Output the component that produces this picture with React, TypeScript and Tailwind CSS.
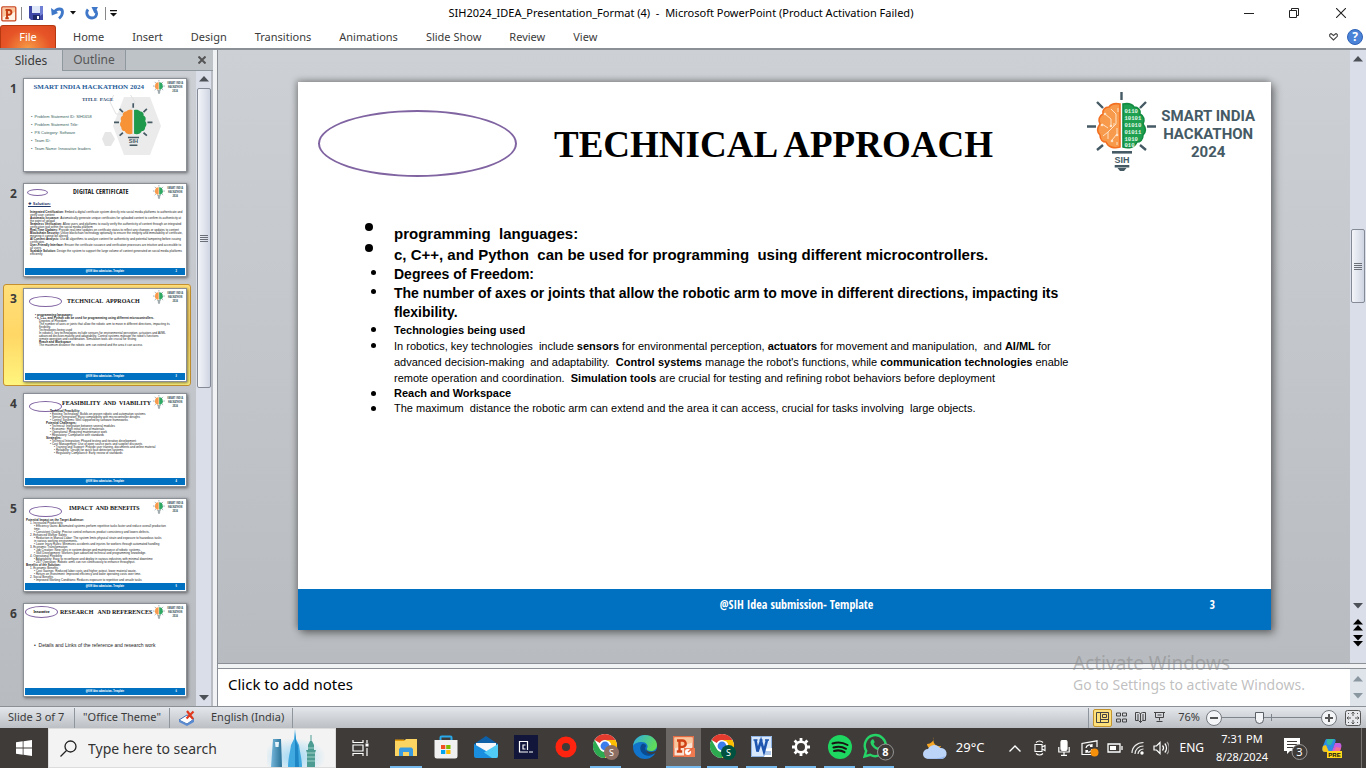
import type { ReactNode } from "react";

const UI = "font-['Noto_Sans','Open_Sans',sans-serif]";

/* ---------- logo ---------- */

function Bulb({ className }: { className: string }) {
  return (
    <svg viewBox="0 0 70 80" className={className} aria-hidden="true">
      <g stroke="#455a64" strokeWidth="2.4" fill="none">
        <path d="M34.5 0v8M0 34.5h9M60 34.5h9M10 10l6 6M59 10l-6 6M10 58l6-5M59 58l-6-5" />
      </g>
      <path
        d="M33 12c-5-1-9 0-11 3-4 0-7 3-6 7-4 2-5 6-3 10-3 4-3 8 0 11 0 5 3 7 6 7 2 5 8 7 14 5z"
        fill="#f79a4b"
        stroke="#f36f21"
        strokeWidth="1.6"
      />
      <path
        d="M36 12c5-1 9 0 11 3 4 0 7 3 6 7 4 2 5 6 3 10 3 4 3 8 0 11 0 5-3 7-6 7-2 5-8 7-14 5z"
        fill="#1fa050"
        stroke="#128a41"
        strokeWidth="1.6"
      />
      <path
        d="M18 22l6 5v7M24 17l5 5v10l-8 8v7M15 32l6 4M31 16v4M16 44l5-4M30 36v6l-5 6M30 50v3M27 31v3"
        stroke="#fde2c8"
        strokeWidth="1"
        fill="none"
      />
      <g fill="#fde2c8">
        <circle cx="18" cy="22" r="1.3" />
        <circle cx="24" cy="34" r="1.3" />
        <circle cx="15" cy="33" r="1.3" />
        <circle cx="30" cy="43" r="1.3" />
        <circle cx="25" cy="49" r="1.3" />
      </g>
      <g fill="#e2f6e8" fontFamily="Liberation Mono, monospace" fontSize="5.6" fontWeight="700">
        <text x="37.500" y="21">0110</text>
        <text x="37.500" y="28">10101</text>
        <text x="37.500" y="35">01010</text>
        <text x="37.500" y="42">01011</text>
        <text x="37.500" y="48.500">1010</text>
        <text x="37.500" y="54.500">010</text>
      </g>
      <rect x="25" y="59" width="20" height="2.6" fill="#455a64" />
      <text x="35" y="70.500" textAnchor="middle" fontFamily="Liberation Sans, sans-serif" fontSize="9" fontWeight="700" fill="#455a64">
        SIH
      </text>
      <path d="M27.700 73h14.600v2.400H27.700zM30.500 76h9l-2.500 3h-4z" fill="#455a64" />
    </svg>
  );
}

/* Simplified bulb for sizes at which the circuit and digits cannot be read. */
function BulbMini({ className }: { className: string }) {
  return (
    <svg viewBox="0 0 70 80" className={className} aria-hidden="true">
      <path d="M34.500 0v8M0 34.500h9M60 34.500h9M10 10l6 6M59 10l-6 6M10 58l6-5M59 58l-6-5" stroke="#455a64" strokeWidth="3" />
      <path d="M33 12c-5-1-9 0-11 3-4 0-7 3-6 7-4 2-5 6-3 10-3 4-3 8 0 11 0 5 3 7 6 7 2 5 8 7 14 5z" fill="#f79a4b" />
      <path d="M36 12c5-1 9 0 11 3 4 0 7 3 6 7 4 2 5 6 3 10 3 4 3 8 0 11 0 5-3 7-6 7-2 5-8 7-14 5z" fill="#2fa863" />
      <path d="M25 60h20v4H25zM28 66h14v4H28zM28 73h14l-4 5h-6z" fill="#455a64" />
    </svg>
  );
}

function ThumbLogo() {
  return (
    <div className="ml-auto flex shrink-0 items-center gap-[2px] pr-[3px]">
      <BulbMini className="h-[14px] w-3" />
      <div className="text-center font-['Open_Sans_Condensed','Roboto',sans-serif] text-[3px] leading-[4px] font-bold whitespace-nowrap text-[#455a64]">
        SMART INDIA
        <br />
        HACKATHON
        <br />
        2024
      </div>
    </div>
  );
}

/* ---------- slide thumbnails ---------- */

type Line = { h?: string; t: string; b?: boolean; i?: 0 | 1 | 2 };
const INDENT = ["pl-0", "pl-1", "pl-2"];

function Lines({ lines }: { lines: Line[] }) {
  return (
    <div>
      {lines.map((l, k) => (
        <p key={k} className={`${INDENT[l.i ?? 0]} ${l.b ? "font-bold" : ""}`}>
          {l.h ? <b>{l.h} </b> : null}
          {l.t}
        </p>
      ))}
    </div>
  );
}

function ThumbFooter({ n }: { n: number }) {
  return (
    <div className="mx-px mb-px grid h-[7px] shrink-0 grid-cols-[1fr_auto_1fr] items-center bg-[#0070c0] font-['Open_Sans_Condensed','Roboto',sans-serif] text-[3px] leading-[3px] font-bold text-white">
      <span />
      <span>@SIH Idea submission- Template</span>
      <span className="pr-2 text-right">{n}</span>
    </div>
  );
}

function ThumbHead({ ellipse, title }: { ellipse: ReactNode; title: ReactNode }) {
  return (
    <div className="flex h-4 shrink-0 items-center">
      {ellipse}
      {title}
      <ThumbLogo />
    </div>
  );
}

const OVAL = "shrink-0 rounded-[50%] border border-[#8064a2]";
const SERIF_TITLE = "font-['Liberation_Serif',serif] text-[6px] leading-[8px] font-bold whitespace-pre text-[#111]";

const SLIDE2: Line[] = [
  { h: "Integrated Certification:", t: "Embed a digital certificate system directly into social media platforms to authenticate and" },
  { t: "verify user content" },
  { h: "Automatic Issuance:", t: "Automatically generate unique certificates for uploaded content to confirm its authenticity at" },
  { t: "the point of upload" },
  { h: "Seamless Verification:", t: "Allow users and platforms to easily verify the authenticity of content through an integrated" },
  { t: "verification tool within the social media platform" },
  { h: "Real-Time Updates:", t: "Provide real-time updates on certificate status to reflect any changes or updates to content" },
  { h: "Blockchain Security:", t: "Utilize blockchain technology optionally to ensure the integrity and immutability of certificate," },
  { t: "meaning it cannot be altered" },
  { h: "AI Content Analysis:", t: "Use AI algorithms to analyze content for authenticity and potential tampering before issuing" },
  { t: "certificates" },
  { h: "User-Friendly Interface:", t: "Ensure the certificate issuance and verification processes are intuitive and accessible to" },
  { t: "all users" },
  { h: "Scalable Solution:", t: "Design the system to support the large volume of content generated on social media platforms" },
  { t: "efficiently" },
];

const SLIDE3: Line[] = [
  { t: "• programming languages:", b: true },
  { t: "• c, C++, and Python can be used for programming using different microcontrollers.", b: true },
  { t: "Degrees of Freedom:", i: 1 },
  { t: "The number of axes or joints that allow the robotic arm to move in different directions, impacting its", i: 1 },
  { t: "flexibility.", i: 1 },
  { t: "Technologies being used", i: 1 },
  { t: "In robotics, key technologies include sensors for environmental perception, actuators and AI/ML", i: 1 },
  { t: "advanced decision-making and adaptability. Control systems manage the robot's functions", i: 1 },
  { t: "remote operation and coordination. Simulation tools are crucial for testing", i: 1 },
  { t: "Reach and Workspace", i: 1, b: true },
  { t: "The maximum distance the robotic arm can extend and the area it can access", i: 1 },
];

const SLIDE4: Line[] = [
  { t: "Technical Feasibility:", b: true, i: 1 },
  { t: "• Existing Technology: Builds on proven robotic and automation systems", i: 1 },
  { t: "• Sensor Integration: Easy compatibility with microcontroller designs", i: 1 },
  { t: "• Control Systems: Well supported by software frameworks", i: 1 },
  { t: "Potential Challenges:", b: true },
  { t: "• Technical: Integration between several modules", i: 1 },
  { t: "• Economic: High initial price of materials", i: 1 },
  { t: "• Operational: Requiring maintenance work", i: 1 },
  { t: "• Regulatory: Compliance with standards", i: 1 },
  { t: "Strategies:", b: true },
  { t: "• Technical Integration: Phased testing and iterative development", i: 1 },
  { t: "• Cost Management: Use of open source parts and supplier discounts", i: 1 },
  { t: "• Training and Support: Provide user training, documents and online material", i: 2 },
  { t: "• Reliability: Design for quick fault detection systems", i: 2 },
  { t: "• Regulatory Compliance: Early review of standards", i: 2 },
];

const SLIDE5: Line[] = [
  { t: "Potential Impact on the Target Audience:", b: true },
  { t: "1. Increased Productivity", i: 1 },
  { t: "• Efficiency Gains: Automated systems perform repetitive tasks faster and reduce overall production", i: 2 },
  { t: "time.", i: 2 },
  { t: "• Consistent Quality: Precise control enhances product consistency and lowers defects.", i: 2 },
  { t: "2. Enhanced Worker Safety", i: 1 },
  { t: "• Reduction in Manual Labor: The system limits physical strain and exposure to hazardous tasks", i: 2 },
  { t: "in various working environments.", i: 2 },
  { t: "• Lower Injury Rates: Minimizes accidents and injuries for workers through automated handling", i: 2 },
  { t: "3. Economic Transformation", i: 1 },
  { t: "• Job Creation: New roles in system design and maintenance of robotic systems.", i: 2 },
  { t: "• Skill Development: Workers gain advanced technical and programming knowledge.", i: 2 },
  { t: "4. Operational Flexibility", i: 1 },
  { t: "• Adaptability: Easy to reconfigure and deploy in various industries with minimal downtime", i: 2 },
  { t: "• 24/7 Operation: Robotic arms can run continuously to enhance throughput.", i: 2 },
  { t: "Benefits of the Solution:", b: true },
  { t: "1. Economic Benefits", i: 1 },
  { t: "• Cost Savings: Reduced labor costs and higher output, lower material waste.", i: 2 },
  { t: "• Return on Investment: Improved efficiency and lower operating costs over time.", i: 2 },
  { t: "2. Social Benefits", i: 1 },
  { t: "• Improved Working Conditions: Reduces exposure to repetitive and unsafe tasks", i: 2 },
];

const SMALL = "font-['Liberation_Sans',sans-serif] text-[3px] leading-[3px] whitespace-nowrap text-[#222]";

function Thumb1() {
  return (
    <div className="flex h-full flex-col text-left">
      <div className="flex h-4 shrink-0 items-center">
        <span className="ml-auto font-['Liberation_Serif',serif] text-[7px] leading-[8px] font-bold whitespace-nowrap text-[#1f5c99]">
          SMART INDIA HACKATHON 2024
        </span>
        <ThumbLogo />
      </div>
      <div className="flex flex-1">
        <div className="relative z-10 w-[78px] shrink-0">
          <p className="pl-[58px] font-['Liberation_Serif',serif] text-[5px] leading-[10px] font-bold whitespace-pre text-[#2c4770]">
            TITLE  PAGE
          </p>
          <ul className="list-none pt-2 pl-[7px] font-['Liberation_Sans',sans-serif] text-[4px] leading-[8px] whitespace-nowrap text-[#35605a]">
            <li>•&nbsp; Problem Statement ID: SIH1658</li>
            <li>•&nbsp; Problem Statement Title:</li>
            <li>•&nbsp; PS Category: Software</li>
            <li>•&nbsp; Team ID:</li>
            <li>•&nbsp; Team Name: Innovative leaders</li>
          </ul>
        </div>
        <svg viewBox="0 0 62 62" className="h-[62px] w-[62px]" aria-hidden="true">
          <path d="M22 2h26l11 29-11 29H22L11 31z" fill="#ebebeb" />
          <path d="M3 37h6l4 7-4 7H3l-3-7z" fill="#e6e6e6" />
          <path d="M14-4h12l7 11-7 12H14L8 7z" fill="none" stroke="#e2e2e2" strokeWidth="1" />
          <svg x="12" y="7" width="39" height="47" viewBox="0 0 70 80">
            <g stroke="#455a64" strokeWidth="3">
              <path d="M34.500 0v8M0 34.500h9M60 34.500h9M10 10l6 6M59 10l-6 6M10 58l6-5M59 58l-6-5" />
            </g>
            <path d="M33 12c-5-1-9 0-11 3-4 0-7 3-6 7-4 2-5 6-3 10-3 4-3 8 0 11 0 5 3 7 6 7 2 5 8 7 14 5z" fill="#f79336" />
            <path d="M36 12c5-1 9 0 11 3 4 0 7 3 6 7 4 2 5 6 3 10 3 4 3 8 0 11 0 5-3 7-6 7-2 5-8 7-14 5z" fill="#1f9a4d" />
            <path d="M25 60h20v3H25zM28 74h14v3H28z" fill="#455a64" />
            <text x="35" y="72" textAnchor="middle" fontSize="10" fontWeight="700" fontFamily="Liberation Sans, sans-serif" fill="#455a64">SIH</text>
          </svg>
        </svg>
      </div>
    </div>
  );
}

function Thumb2() {
  return (
    <div className="flex h-full flex-col text-left">
      <ThumbHead
        ellipse={<div className={`${OVAL} ml-[3px] h-[7px] w-[21px]`} />}
        title={
          <span className="flex-1 text-center font-['Open_Sans_Condensed','Roboto',sans-serif] text-[7px] leading-[8px] font-bold whitespace-nowrap text-[#222]">
            DIGITAL CERTIFICATE
          </span>
        }
      />
      <p className="pt-px pl-1 text-[4px] leading-[6px] font-bold text-[#1f3a6b] underline">❖ Solution:</p>
      <div className={`${SMALL} flex-1 pt-1 pl-[6px]`}>
        <Lines lines={SLIDE2} />
      </div>
      <ThumbFooter n={2} />
    </div>
  );
}

function Thumb3() {
  return (
    <div className="flex h-full flex-col text-left">
      <ThumbHead
        ellipse={<div className={`${OVAL} mt-2 ml-[5px] h-[11px] w-[33px]`} />}
        title={<span className={`${SERIF_TITLE} mt-2 ml-[5px]`}>TECHNICAL  APPROACH</span>}
      />
      <div className={`${SMALL} flex-1 pt-[9px] pl-[11px]`}>
        <Lines lines={SLIDE3} />
      </div>
      <ThumbFooter n={3} />
    </div>
  );
}

function Thumb4() {
  return (
    <div className="flex h-full flex-col text-left">
      <ThumbHead
        ellipse={<div className={`${OVAL} mt-2 ml-[5px] h-[11px] w-[33px]`} />}
        title={<span className={`${SERIF_TITLE} mt-px`}>FEASIBILITY  AND  VIABILITY</span>}
      />
      <div className={`${SMALL} flex-1 pl-[22px]`}>
        <Lines lines={SLIDE4} />
      </div>
      <ThumbFooter n={4} />
    </div>
  );
}

function Thumb5() {
  return (
    <div className="flex h-full flex-col text-left">
      <ThumbHead
        ellipse={<div className={`${OVAL} mt-2 ml-[5px] h-[11px] w-[33px]`} />}
        title={<span className={`${SERIF_TITLE} mt-px ml-[7px]`}>IMPACT  AND BENEFITS</span>}
      />
      <div className={`${SMALL} h-0 flex-1 pt-1 pl-[2px]`}>
        <Lines lines={SLIDE5} />
      </div>
      <ThumbFooter n={5} />
    </div>
  );
}

function Thumb6() {
  return (
    <div className="flex h-full flex-col text-left">
      <ThumbHead
        ellipse={
          <div className={`${OVAL} ml-px flex h-3 w-[33px] items-center justify-center text-[3px] leading-[3px] font-bold`}>Innovative</div>
        }
        title={<span className={`${SERIF_TITLE} ml-[2px]`}>RESEARCH   AND REFERENCES</span>}
      />
      <p className="flex-1 pt-[22px] pl-[10px] font-['Liberation_Sans',sans-serif] text-[5px] leading-[6px] text-[#222]">
        •&nbsp; Details and Links of the reference and research work
      </p>
      <ThumbFooter n={6} />
    </div>
  );
}

const THUMBS = [Thumb1, Thumb2, Thumb3, Thumb4, Thumb5, Thumb6];

/* ---------- scroll bars ---------- */

function Arrow({ dir, color = "#4c5158" }: { dir: "up" | "down"; color?: string }) {
  return (
    <svg viewBox="0 0 10 6" className="h-[6px] w-[10px] shrink-0" aria-hidden="true">
      <path d={dir === "up" ? "M0 5.500L5 0l5 5.500z" : "M0 0l5 5.500L10 0z"} fill={color} />
    </svg>
  );
}

function Grip() {
  return (
    <div className="flex w-2 flex-col gap-px">
      <i className="h-px bg-[#6b7078]" />
      <i className="h-px bg-[#6b7078]" />
      <i className="h-px bg-[#6b7078]" />
      <i className="h-px bg-[#6b7078]" />
    </div>
  );
}

const SB_THUMB =
  "flex w-[14px] items-center justify-center rounded-[2px] border border-[#858b96] bg-linear-to-r from-[#f3f5f9] to-[#cfd5e2]";

/* ---------- ribbon ---------- */

const TABS = ["Home", "Insert", "Design", "Transitions", "Animations", "Slide Show", "Review", "View"];

function PptSmall() {
  return (
    <svg viewBox="0 0 17 17" className="h-[17px] w-[17px]" aria-hidden="true">
      <rect x="1.800" y="1.800" width="14" height="14" rx="1" fill="#fff3e6" stroke="#c9441c" strokeWidth="1.300" />
      <path d="M3 3h12v4L3 12z" fill="#f9b27a" opacity=".7" />
      <path d="M7 13.500V5M5.500 5H9a2.400 2.400 0 0 1 0 4.800H7M5.300 13.300h3.500" fill="none" stroke="#c53d13" strokeWidth="1.900" />
    </svg>
  );
}

function TitleBar() {
  return (
    <header className="flex h-[26px] shrink-0 items-center bg-white">
      <div className="flex w-[120px] shrink-0 items-center">
        <PptSmall />
        <span className="ml-1 h-[13px] w-px bg-[#888]" />
        <button aria-label="Save" className="ml-[7px]">
          <svg viewBox="0 0 14 14" className="h-[14px] w-[14px]">
            <path d="M0 0h14v14H2l-2-2z" fill="#4149a8" />
            <path d="M3 0h8v7H3z" fill="#dfe8f8" />
            <path d="M11 0h3v8l-3 2z" fill="#6f7fd4" />
            <path d="M4 9h7v5H4z" fill="#1f2a6b" />
            <path d="M8 10h2v3H8z" fill="#fff" />
          </svg>
        </button>
        <button aria-label="Undo" className="ml-2">
          <svg viewBox="0 0 14 14" className="h-[14px] w-[14px]">
            <path d="M3.500 6C6 2 11.500 2 11.500 6c0 2.800-1.500 4.800-3.500 6.500" fill="none" stroke="#3f78c9" strokeWidth="2.800" />
            <path d="M0 2l.8 7.500L7.200 7z" fill="#3f78c9" />
          </svg>
        </button>
        <svg viewBox="0 0 6 4" className="ml-[5px] h-1 w-[6px]" aria-hidden="true">
          <path d="M0 0h6L3 3.500z" fill="#111" />
        </svg>
        <button aria-label="Repeat" className="ml-[9px]">
          <svg viewBox="0 0 14 14" className="h-[14px] w-[14px]">
            <path d="M3 3.500c-2.500 3-1 8.500 4 8.500 4.500 0 6-5 3-8" fill="none" stroke="#3f78c9" strokeWidth="2.800" />
            <path d="M6.500 1H13L9.500 7.500z" fill="#3f78c9" />
          </svg>
        </button>
        <span className="ml-[6px] h-[13px] w-px bg-[#888]" />
        <svg viewBox="0 0 7 7" className="ml-1 h-[7px] w-[7px]" aria-hidden="true">
          <path d="M0 0h7v1.300H0zM0 3h7L3.500 6.500z" fill="#111" />
        </svg>
      </div>
      <h1 className="flex-1 pl-4 text-center text-[11px] leading-4 whitespace-pre text-black">
        SIH2024_IDEA_Presentation_Format (4)  -  Microsoft PowerPoint (Product Activation Failed)
      </h1>
      <div className="flex shrink-0 items-center">
        <button aria-label="Minimize" className="flex w-[46px] justify-center">
          <svg viewBox="0 0 10 10" className="h-[10px] w-[10px]">
            <path d="M0 5.500h10" stroke="#222" />
          </svg>
        </button>
        <button aria-label="Restore" className="flex w-[44px] justify-center">
          <svg viewBox="0 0 10 10" className="h-[10px] w-[10px]" fill="none" stroke="#222">
            <path d="M.5 2.500h7v7h-7zM2.500 2.500v-2h7v7h-2" />
          </svg>
        </button>
        <button aria-label="Close" className="flex w-[50px] justify-center">
          <svg viewBox="0 0 10 10" className="h-[10px] w-[10px]">
            <path d="M0 0l10 10M10 0L0 10" stroke="#222" strokeWidth="1.100" />
          </svg>
        </button>
      </div>
    </header>
  );
}

function RibbonTabs() {
  return (
    <nav className="flex h-6 shrink-0 items-stretch border-b-2 border-[#8b9097] bg-white text-[11px] text-[#3b3b3b]">
      <button className="mt-[-1px] w-14 rounded-t-[3px] border border-b-0 border-[#b5380f] bg-[radial-gradient(ellipse_at_bottom,#f79a45_0%,#e65427_60%,#dd4a22_100%)] text-white">
        File
      </button>
      <div className="flex pl-[3px]">
        {TABS.map((t) => (
          <button key={t} className="px-[14px]">
            {t}
          </button>
        ))}
      </div>
      <div className="ml-auto flex items-center gap-[9px] pr-[3px]">
        <button aria-label="Minimize the Ribbon">
          <svg viewBox="0 0 9 8" className="h-2 w-[9px]" fill="none" stroke="#444" strokeWidth="1.100">
            <path d="M4.500 7L.7 3.300V1.500l1.300-1 2.500 2 2.500-2 1.300 1v1.800z" />
          </svg>
        </button>
        <button aria-label="Help" className="flex size-4 items-center justify-center rounded-full border border-[#2f62b5] bg-[#4b83d8] text-[12px] leading-3 font-bold text-white">
          ?
        </button>
      </div>
    </nav>
  );
}

/* ---------- left pane ---------- */

function SlidesPane() {
  return (
    <aside className="flex w-[213px] shrink-0 flex-col bg-linear-to-b from-[#cdd1d6] to-[#b8bbc0]">
      <div className="flex h-[21px] shrink-0 text-[12px] leading-5 text-[#3b3b3b]">
        <button className="w-[62px]">Slides</button>
        <button className="w-16 border-x border-b border-[#8f979f] bg-[#b6babf] text-[#555]">Outline</button>
        <div className="flex flex-1 items-center justify-end border-b border-[#8f979f] bg-[#bec3c8] pr-[7px]">
          <button aria-label="Close pane">
            <svg viewBox="0 0 8 8" className="h-2 w-2">
              <path d="M.5.5l7 7M7.500.5l-7 7" stroke="#555" strokeWidth="2" />
            </svg>
          </button>
        </div>
      </div>
      <div className="flex min-h-0 flex-1">
        <ol className="flex min-w-0 flex-1 flex-col gap-[3px] overflow-hidden pt-[3px] pr-[5px] pl-[3px]">
          {THUMBS.map((T, k) => (
            <li key={k} className="shrink-0">
              <button
                className={`flex h-[102px] w-full items-start rounded-[3px] border pt-[3px] ${
                  k === 2
                    ? "border-[#c4902f] bg-linear-to-b from-[#ffdf7a] via-[#ffd766] to-[#fff57e]"
                    : "border-transparent"
                }`}
              >
                <span className="w-[19px] shrink-0 pt-[3px] text-center text-[12px] leading-4 font-bold text-[#3b3b3b]">{k + 1}</span>
                <span className="block h-[94px] w-[164px] shrink-0 overflow-hidden border border-[#8a8f96] bg-white shadow-[1px_1px_3px_rgba(0,0,0,0.5)]">
                  <T />
                </span>
              </button>
            </li>
          ))}
        </ol>
        <div className="flex w-[15px] shrink-0 flex-col items-center bg-[#d9dee8] py-[5px]">
          <Arrow dir="up" />
          <div className={`${SB_THUMB} mt-[6px] h-[300px]`}>
            <Grip />
          </div>
          <div className="mt-auto">
            <Arrow dir="down" />
          </div>
        </div>
        <div className="w-[2px] bg-[#b9bdc3]" />
      </div>
    </aside>
  );
}

/* ---------- slide ---------- */

function Bullet({ big, children, className }: { big?: boolean; children: ReactNode; className: string }) {
  return (
    <li className={`flex whitespace-pre-wrap ${className}`}>
      <span className={`w-[33px] shrink-0 ${big ? "pl-1" : "pt-[5px] pl-[10px]"}`}>
        <i className={`block rounded-full bg-black ${big ? "size-2" : "size-[5px]"}`} />
      </span>
      <div>{children}</div>
    </li>
  );
}

function Slide() {
  return (
    <article className="flex flex-1 flex-col bg-white shadow-[3px_3px_8px_rgba(0,0,0,0.45),-2px_-2px_6px_rgba(0,0,0,0.25)]">
      <div className="flex h-[141px] items-start pt-[10px] pr-4 pl-5">
        <div className="mt-[18px] h-[67px] w-[199px] shrink-0 rounded-[50%] border-2 border-[#8064a2]" />
        <h2 className="mt-[29px] ml-[37px] font-['Liberation_Serif',serif] text-[37px] leading-[48px] font-bold whitespace-nowrap text-black">
          TECHNICAL APPROACH
        </h2>
        <div className="ml-auto flex items-start gap-1">
          <Bulb className="h-20 w-[70px]" />
          <p className="mt-[15px] text-center font-['Roboto',sans-serif] text-[15px] leading-[18px] font-bold text-[#455a64]">
            SMART INDIA
            <br />
            HACKATHON
            <br />
            2024
          </p>
        </div>
      </div>
      <ul className="flex-1 pl-[63px] font-['Liberation_Sans',sans-serif] text-[11px] leading-4 text-black">
        <Bullet big className="text-[15px] leading-[21px] font-bold">programming  languages:</Bullet>
        <Bullet big className="text-[15px] leading-[21px] font-bold">
          c, C++, and Python  can be used for programming  using different microcontrollers.
        </Bullet>
        <Bullet className="text-[14px] leading-[19px] font-bold">Degrees of Freedom:</Bullet>
        <Bullet className="text-[14px] leading-[19px] font-bold">
          The number of axes or joints that allow the robotic arm to move in different directions, impacting its
          <br />
          flexibility.
        </Bullet>
        <Bullet className="font-bold">Technologies being used</Bullet>
        <Bullet className="">
          In robotics, key technologies  include <b>sensors</b> for environmental perception, <b>actuators</b> for movement and manipulation,  and <b>AI/ML</b> for
          <br />
          advanced decision-making  and adaptability.  <b>Control systems</b> manage the robot's functions, while <b>communication technologies</b> enable
          <br />
          remote operation and coordination.  <b>Simulation tools</b> are crucial for testing and refining robot behaviors before deployment
        </Bullet>
        <Bullet className="leading-[15px] font-bold">Reach and Workspace</Bullet>
        <Bullet className="leading-[15px]">
          The maximum  distance the robotic arm can extend and the area it can access, crucial for tasks involving  large objects.
        </Bullet>
      </ul>
      <footer className="grid h-[41px] shrink-0 grid-cols-[1fr_auto_1fr] bg-[#0070c0] pt-2 pl-6 font-['Open_Sans_Condensed','Roboto',sans-serif] text-[12px] leading-4 font-bold text-white">
        <span />
        <span>@SIH Idea submission- Template</span>
        <span className="pr-14 text-right">3</span>
      </footer>
    </article>
  );
}

function Editor() {
  return (
    <main className="flex min-w-0 flex-1 flex-col">
      <div className="flex min-h-0 flex-1 border-b border-[#8b9097]">
        <div className="flex min-w-0 flex-1 bg-linear-to-b from-[#cdd0d4] to-[#b8bbbf] pt-8 pr-[79px] pb-[33px] pl-20">
          <Slide />
        </div>
        <div className="flex w-4 shrink-0 flex-col items-center bg-[#d9dee8] pt-[6px]">
          <Arrow dir="up" />
          <div className={`${SB_THUMB} mt-[167px] h-[74px]`}>
            <Grip />
          </div>
          <div className="mt-auto flex flex-col items-center pb-4">
            <Arrow dir="down" />
            <button aria-label="Previous Slide" className="mt-[10px] flex flex-col">
              <Arrow dir="up" color="#000" />
              <Arrow dir="up" color="#000" />
            </button>
            <button aria-label="Next Slide" className="mt-1 flex flex-col">
              <Arrow dir="down" color="#000" />
              <Arrow dir="down" color="#000" />
            </button>
          </div>
        </div>
      </div>
      <div className="h-1 shrink-0 bg-[#f1f2f4]" />
      <div className="flex h-[38px] shrink-0 border-t border-[#8b9097] bg-white">
        <textarea
          aria-label="Notes"
          placeholder="Click to add notes"
          className="flex-1 resize-none overflow-hidden bg-white pt-[3px] pl-[10px] text-[15px] leading-6 text-black placeholder:text-black"
        />
        <div className="flex w-4 flex-col items-center justify-between bg-[#dfe3ea] py-[7px]">
          <Arrow dir="up" color="#8b97a0" />
          <Arrow dir="down" color="#8b97a0" />
        </div>
      </div>
    </main>
  );
}

/* ---------- status bar ---------- */

function StatusBar() {
  const sep = "h-5 w-px bg-[#8f959c]";
  return (
    <div className="flex h-[22px] shrink-0 items-center border-t border-[#8b9097] bg-linear-to-b from-[#e4e7eb] to-[#bcc0c5] text-[11px] text-[#3b3b3b]">
      <span className="w-[74px] pl-2 whitespace-nowrap">Slide 3 of 7</span>
      <span className={sep} />
      <span className="w-[94px] text-center whitespace-nowrap">"Office Theme"</span>
      <span className={sep} />
      <button aria-label="Spelling" className="ml-2">
        <svg viewBox="0 0 18 16" className="h-4 w-[18px]">
          <path d="M1 10l8-5 7 4-7 5z" fill="#fff" stroke="#3d6fb8" />
          <path d="M1 10v2l8 4v-2zM9 14v2l7-4v-3z" fill="#5a8ad0" />
          <path d="M9 1l6 8M15.500 1.500l-7 7" stroke="#e0391e" strokeWidth="2.200" />
        </svg>
      </button>
      <button className="mr-2 ml-[15px] whitespace-nowrap">English (India)</button>
      <span className={sep} />
      <div className="ml-auto flex shrink-0 items-center">
        <span className={sep} />
        <button aria-label="Normal" className="ml-1 flex h-[18px] w-[19px] items-center justify-center rounded-[2px] border border-[#c2942f] bg-[#fde07a]">
          <svg viewBox="0 0 13 11" className="h-[11px] w-[13px]" fill="none" stroke="#444">
            <path d="M.5.5h12v10H.5zM4.500.5v10M4.500 7.500h8M6.500 2.500h4v3h-4z" />
          </svg>
        </button>
        <button aria-label="Slide Sorter" className="ml-[3px] flex w-[13px] justify-center">
          <svg viewBox="0 0 11 11" className="size-[11px]" fill="none" stroke="#444">
            <path d="M.5 1h4v3h-4zM6.500 1h4v3h-4zM.5 7h4v3h-4zM6.500 7h4v3h-4z" />
          </svg>
        </button>
        <button aria-label="Reading View" className="ml-[6px] flex w-[13px] justify-center">
          <svg viewBox="0 0 11 11" className="size-[11px]" fill="none" stroke="#444">
            <path d="M.5.5h3l2 1 2-1h3v8h-3l-2 2-2-2h-3zM5.500 1.500v9M2 3h2M2 5h2M2 7h2M7 3h2M7 5h2M7 7h2" />
          </svg>
        </button>
        <button aria-label="Slide Show" className="ml-[6px] flex w-[13px] justify-center">
          <svg viewBox="0 0 11 11" className="size-[11px]" fill="none" stroke="#444">
            <path d="M0 .5h11M1.500.5v5h8v-5M5.500 5.500v3M2.500 9.500h6M3.500 3h4" />
          </svg>
        </button>
        <button className="ml-[11px] w-6 whitespace-nowrap">76%</button>
        <button aria-label="Zoom out" className="ml-[5px] flex size-4 items-center justify-center rounded-full border border-[#74797f] bg-[#f4f5f7]">
          <i className="h-[2px] w-2 bg-[#555]" />
        </button>
        <input
          type="range"
          aria-label="Zoom"
          min={10}
          max={190}
          defaultValue={76}
          className="h-4 w-[99px] appearance-none bg-[linear-gradient(#7e848b,#7e848b),linear-gradient(#7e848b,#7e848b)] bg-[length:100%_1px,1px_7px] bg-center bg-no-repeat [&::-webkit-slider-thumb]:h-3 [&::-webkit-slider-thumb]:w-[9px] [&::-webkit-slider-thumb]:appearance-none [&::-webkit-slider-thumb]:rounded-b-[5px] [&::-webkit-slider-thumb]:border [&::-webkit-slider-thumb]:border-[#5b6067] [&::-webkit-slider-thumb]:bg-[#f4f5f7]"
        />
        <button aria-label="Zoom in" className="flex size-4 items-center justify-center rounded-full border border-[#74797f] bg-[#f4f5f7]">
          <svg viewBox="0 0 8 8" className="size-2">
            <path d="M4 0v8M0 4h8" stroke="#555" strokeWidth="2" />
          </svg>
        </button>
        <button aria-label="Fit slide to window" className="mr-[5px] ml-2">
          <svg viewBox="0 0 16 16" className="size-4" fill="none" stroke="#555">
            <rect x=".5" y=".5" width="15" height="15" rx="2" fill="#e6e8eb" />
            <path d="M8 2v4M6.500 3.500L8 2l1.500 1.500M8 14v-4M6.500 12.500L8 14l1.500-1.500M2 8h4M3.500 6.500L2 8l1.500 1.500M14 8h-4M12.500 6.500L14 8l-1.500 1.500" />
            <path d="M3 3l1 1M13 3l-1 1M3 13l1-1M13 13l-1-1" />
          </svg>
        </button>
      </div>
    </div>
  );
}

/* ---------- taskbar ---------- */

function TaskButton({ label, running, active, wide, children }: { label: string; running?: boolean; active?: boolean; wide?: boolean; children: ReactNode }) {
  return (
    <button
      aria-label={label}
      className={`flex h-10 shrink-0 flex-col items-center ${active ? "px-[2px]" : "px-1"} ${wide ? "w-10" : "w-[39px]"}`}
    >
      <span className={`flex w-full flex-1 items-center justify-center ${active ? "bg-[#6b6765]" : ""}`}>{children}</span>
      <span className={`h-[2px] w-full ${running ? "bg-[#76b9ed]" : ""}`} />
    </button>
  );
}

function Chrome({ badge }: { badge: string }) {
  return (
    <svg viewBox="0 0 26 26" className="size-[26px]" aria-hidden="true">
      <circle cx="12" cy="12" r="12" fill="#fff" />
      <path d="M12 0a12 12 0 0 1 10.400 6H12a6 6 0 0 0-5.200 3L1.600 6A12 12 0 0 1 12 0z" fill="#e33b2e" />
      <path d="M1.600 6A12 12 0 0 0 12 24l5.200-9A6 6 0 0 1 6.800 15z" fill="#2da94f" />
      <path d="M22.400 6A12 12 0 0 1 12 24l5.200-9a6 6 0 0 0-.8-7.500L12 6z" fill="#fdbd00" />
      <circle cx="12" cy="12" r="5.600" fill="#fff" />
      <circle cx="12" cy="12" r="4.400" fill="#3b7ded" />
      <circle cx="18.500" cy="18.500" r="7.500" fill={badge} />
      <text x="18.500" y="22" textAnchor="middle" fontSize="9" fontFamily="Noto Sans, sans-serif" fill="#fff">S</text>
    </svg>
  );
}

function Taskbar() {
  return (
    <footer className="flex h-10 shrink-0 items-stretch bg-[#3f3b38] text-white">
      <button aria-label="Start" className="flex w-12 shrink-0 items-center justify-center">
        <svg viewBox="0 0 16 16" className="size-4" fill="#fff">
          <path d="M0 2.300L6.700 1.300v6.200H0zM7.500 1.200L16 0v7.500H7.500zM0 8.400h6.700v6.300L0 13.700zM7.500 8.400H16V16l-8.500-1.200z" />
        </svg>
      </button>
      <label className="flex w-72 shrink-0 items-center border border-[#dcdcdc] bg-[#f3f3f3] pl-[11px]">
        <svg viewBox="0 0 17 17" className="size-[17px] shrink-0" fill="none" stroke="#222" strokeWidth="1.300">
          <circle cx="10.500" cy="6.500" r="5.500" />
          <path d="M6.500 10.500L.5 16.500" />
        </svg>
        <input
          aria-label="Type here to search"
          placeholder="Type here to search"
          className="w-0 flex-1 bg-transparent pl-[11px] text-[14px] text-[#333] outline-none placeholder:text-[#333]"
        />
        <svg viewBox="0 0 60 38" className="h-[38px] w-[68px] shrink-0 pr-2" aria-hidden="true">
          <defs>
            <radialGradient id="glow">
              <stop offset="0" stopColor="#9fd8f5" />
              <stop offset="1" stopColor="#f3f3f3" />
            </radialGradient>
            <linearGradient id="tower" x1="0" x2="1">
              <stop offset="0" stopColor="#76b8dc" />
              <stop offset="1" stopColor="#2a7096" />
            </linearGradient>
          </defs>
          <ellipse cx="27" cy="28" rx="32" ry="19" fill="url(#glow)" />
          <path d="M4 38L6 10h8l1 28z" fill="url(#tower)" />
          <path d="M8 13h4l-.5 5h-3z" fill="#e8f4fa" />
          <path d="M21 38c0-8 2-14 3-22l3-6 1-10 1 10 3 6c1 8 3 14 3 22z" fill="#3fa9e0" />
          <path d="M28 4l1 8 2 5 1 21h-4z" fill="#1e86c4" />
          <path d="M40 38V24l-1-3h2v-5l2-4h2l2 4v5h2l-1 3v14zM43.500 6h1v8h-1z" fill="#4c9c93" />
          <path d="M40 24h8M40 28h8M40 32h8M41 19h6" stroke="#9ed0c6" />
        </svg>
      </label>
      <button aria-label="Task View" className="flex w-12 shrink-0 items-center justify-center">
        <svg viewBox="0 0 17 16" className="h-4 w-[17px]" fill="none" stroke="#fff" strokeWidth="1.200">
          <path d="M1 0v2.500h10V0M1 5h10v6H1zM1 16v-2.500h10V16M15 0v3M15 8v8" />
          <path d="M13.500 3.500h3v3h-3z" fill="#fff" stroke="none" />
        </svg>
      </button>
      <div className="flex min-w-0 overflow-hidden pl-[2px]">
        <TaskButton label="File Explorer" running wide>
          <svg viewBox="0 0 22 19" className="h-[19px] w-[22px]">
            <path d="M0 1.500h9l2 2H0z" fill="#e39a08" />
            <path d="M0 3h9l2-2h11v17H0z" fill="#fcd462" />
            <path d="M4 18v-7l1.500-1.500h11L18 11v7h-4v-4H8v4z" fill="#3a9be0" />
          </svg>
        </TaskButton>
        <TaskButton label="Microsoft Store" wide>
          <svg viewBox="0 0 24 24" className="size-6">
            <path d="M6.500 6V2.500a1 1 0 0 1 1-1h9a1 1 0 0 1 1 1V6" fill="none" stroke="#29a9ea" strokeWidth="2" />
            <path d="M.5 5h23v16a2.500 2.500 0 0 1-2.500 2.500H3A2.500 2.500 0 0 1 .5 21z" fill="#f1f1f1" />
            <path d="M7 10h4.300v4H7z" fill="#f25022" />
            <path d="M12.200 10h4.300v4h-4.300z" fill="#7fba00" />
            <path d="M7 15h4.300v4H7z" fill="#00a4ef" />
            <path d="M12.200 15h4.300v4h-4.300z" fill="#ffb900" />
          </svg>
        </TaskButton>
        <TaskButton label="Mail" wide>
          <svg viewBox="0 0 24 22" className="h-[22px] w-6">
            <path d="M0 8L12 0l12 8v4H0z" fill="#0d5fa8" />
            <path d="M2 7h20v6L12 18 2 13z" fill="#f5f7fa" />
            <path d="M0 8l24 14H2a2 2 0 0 1-2-2z" fill="#1a8fe0" />
            <path d="M24 8L10 16.500 18 22h4a2 2 0 0 0 2-2z" fill="#4fcbf5" />
          </svg>
        </TaskButton>
        <TaskButton label="Terminal" wide>
          <svg viewBox="0 0 24 24" className="size-6" fill="none" stroke="#fff" strokeWidth="1.200">
            <path d="M0 0h24v24H0z" fill="#11163a" stroke="none" />
            <path d="M14 17H5.500V6.500h8V15M11.500 10H9v4h2.500M15 17h4" />
          </svg>
        </TaskButton>
        <TaskButton label="Opera" wide>
          <svg viewBox="0 0 22 22" className="size-[22px]">
            <circle cx="11" cy="11" r="7.300" fill="none" stroke="#ff2410" strokeWidth="6.500" />
          </svg>
        </TaskButton>
        <TaskButton label="Chrome" running>
          <Chrome badge="#8d6e63" />
        </TaskButton>
        <TaskButton label="Edge">
          <svg viewBox="0 0 24 24" className="size-6">
            <defs>
              <linearGradient id="edge" x1="0" y1="0" x2="1" y2=".4">
                <stop offset="0" stopColor="#2fa9e8" />
                <stop offset="1" stopColor="#5fdd5a" />
              </linearGradient>
            </defs>
            <circle cx="12" cy="12" r="12" fill="#1173c9" />
            <path d="M0 11C1 4 6 0 12 0c7 0 12 5 12 10 0 4-3 6-6 6-3 0-4.500-1-4-2.500 2-3-1-6.500-5-6.500-5 0-8 2-9 4z" fill="url(#edge)" />
            <path d="M9 9c-3 3-2 9 3 11 4 1.500 8 .5 10-2.500-2.500 1-8 1-9.500-2.500-.8-2 .5-3 .5-4.500-.7-1.500-2.500-2.300-4-1.500z" fill="#0a4a8f" />
            <path d="M13 14c.5 3 5 4 9.500 2l1.500-2v4l-3 .5c-4 1-8 0-8-4.500z" fill="#3f3b38" />
          </svg>
        </TaskButton>
        <TaskButton label="PowerPoint" running active>
          <svg viewBox="0 0 22 22" className="size-[22px]">
            <path d="M0 0h21v21H0z" fill="#fbe3d3" />
            <path d="M.8.800h19.400v19.400H.8z" fill="none" stroke="#e0683f" strokeWidth="1.400" />
            <path d="M1.500 1.500h18v5l-18 6z" fill="#fbc59c" />
            <path d="M6.500 16V4.500M4 4.500h5.500a3.200 3.200 0 0 1 0 6.400H6.500M3.800 15.500h5.400" fill="none" stroke="#cf4014" strokeWidth="2.400" />
            <path d="M11 12h11v9H11z" fill="#f07a50" />
            <circle cx="15" cy="16" r="3" fill="#fff" />
            <path d="M15 16l5-4" stroke="#e9663b" strokeWidth="1.500" />
          </svg>
        </TaskButton>
        <TaskButton label="Chrome, second profile" running>
          <Chrome badge="#00513f" />
        </TaskButton>
        <TaskButton label="Word" running>
          <svg viewBox="0 0 22 22" className="size-[22px]">
            <path d="M0 0h21v21H0z" fill="#d9e8fa" />
            <path d="M.5.500h20v20H.5z" fill="none" stroke="#8fb3e4" />
            <path d="M13 13l8-1v9h-8z" fill="#fff" />
            <path d="M14 16h6M14 18h6" stroke="#5d8fd6" />
            <path d="M2.500 4h4M8.500 4h3M14 4h4" stroke="#1d55b0" strokeWidth="1.600" />
            <path d="M4.500 4l2 11.500L10 5l3 10.500L16 4" fill="none" stroke="#1d55b0" strokeWidth="2.600" />
          </svg>
        </TaskButton>
        <TaskButton label="Settings" running>
          <svg viewBox="0 0 20 20" className="size-5" fill="none" stroke="#fff">
            <circle cx="10" cy="10" r="5.300" strokeWidth="2.600" />
            <path d="M10 1v3M10 16v3M1 10h3M16 10h3M3.600 3.600l2.200 2.200M14.200 14.200l2.200 2.200M3.600 16.400l2.200-2.200M14.200 5.800l2.200-2.200" strokeWidth="2.800" />
          </svg>
        </TaskButton>
        <TaskButton label="Spotify" running>
          <svg viewBox="0 0 24 24" className="size-6">
            <circle cx="12" cy="12" r="12" fill="#1ed760" />
            <path d="M4.500 8.500c5-1.500 10.500-1 15 1.500M5.500 12.500c4-1.300 9-.9 12.500 1.300M6 16c3.500-1 7.500-.7 10.500 1.200" fill="none" stroke="#191414" strokeWidth="2" strokeLinecap="round" />
          </svg>
        </TaskButton>
        <TaskButton label="WhatsApp" running>
          <svg viewBox="0 0 31 28" className="h-7 w-[31px]">
            <path d="M1.500 23.500l1.700-5.600a10.500 10.500 0 1 1 4 3.900z" fill="none" stroke="#25d366" strokeWidth="2.400" />
            <path d="M8.500 7c1-1 2-.8 2.400.3l.7 1.700c.2.600-1.100 1.400-.8 2 1 1.800 2.300 2.800 4 3.500.6.200 1.300-1.500 2-1.200l2 1c.8.500-.3 3-2.500 3-4 0-9.300-5-8.800-8.500z" fill="#25d366" />
            <circle cx="22.500" cy="19" r="8" fill="#3f3b38" stroke="#aaa" strokeWidth=".8" />
            <text x="22.500" y="23" textAnchor="middle" fontSize="11" fontWeight="700" fontFamily="Noto Sans, sans-serif" fill="#fff">8</text>
          </svg>
        </TaskButton>
      </div>
      <div className="ml-auto flex shrink-0 items-center text-[12px]">
        <button className="flex items-center gap-2 text-[13px]">
          <svg viewBox="0 0 26 24" className="h-6 w-[26px]">
            <path d="M12 1c-2 5 1 10 7 9-1 3-4 5-8 4-4-1-6-4-6-6 4 0 7-3 7-7z" fill="#f6a623" />
            <path d="M6 23a5 5 0 0 1 0-10 7 7 0 0 1 12-1 5.500 5.500 0 0 1 2 11z" fill="#bcd4f7" />
            <path d="M5 22c5 1 13 1 18-2-1 2-2 3-4 3H6z" fill="#8fb2ee" />
          </svg>
          29°C
        </button>
        <button aria-label="Show hidden icons" className="ml-[25px]">
          <svg viewBox="0 0 12 7" className="h-[7px] w-3" fill="none" stroke="#fff" strokeWidth="1.400">
            <path d="M.5 6.500L6 1l5.500 5.500" />
          </svg>
        </button>
        <svg viewBox="0 0 12 16" className="ml-[13px] h-4 w-3" fill="none" stroke="#fff" strokeWidth="1.100" aria-label="Meet Now">
          <path d="M1 4.500h7v7H1zM8 7l3-1.500v5L8 9M2 2.500C4 .5 7 .5 9 2.500M2 13.500c2 2 5 2 7 0" />
        </svg>
        <svg viewBox="0 0 12 16" className="ml-3 h-4 w-3" fill="none" stroke="#fff" strokeWidth="1.200" aria-label="Microphone">
          <rect x="3" y=".5" width="6" height="10" rx="1.500" fill="#fff" />
          <path d="M.8 7v5h10.400V7M6 12v3M3 15.300h6" />
        </svg>
        <svg viewBox="0 0 18 17" className="ml-[11px] h-[17px] w-[18px]" fill="none" stroke="#fff" strokeWidth="1.200" aria-label="Updates">
          <path d="M10 14.500H1V3.500l15-2.700V7M5 8a3.500 3.500 0 0 1 6-2M11 4v2.300H9M11 9a3.500 3.500 0 0 1-6 2M5 13v-2.300h2" />
          <circle cx="13.500" cy="12.500" r="4" fill="#f7900a" stroke="none" />
        </svg>
        <svg viewBox="0 0 16 10" className="ml-2 h-[10px] w-4" fill="none" stroke="#fff" strokeWidth="1.300" aria-label="Battery">
          <path d="M1 1h12v8H1zM15 3v4" />
          <path d="M3 3h6v4H3z" fill="#fff" stroke="none" />
        </svg>
        <svg viewBox="0 0 14 14" className="ml-2 size-[14px]" fill="none" stroke="#fff" strokeWidth="1.200" aria-label="Wi-Fi">
          <path d="M1 12C1 6 6 1.500 12.500 1.500M4 13c0-4.500 3.500-8 8.500-8M7 13c0-2.500 2.500-5 5.500-5" opacity=".9" />
          <circle cx="11" cy="12" r="1.700" fill="#fff" stroke="none" />
        </svg>
        <svg viewBox="0 0 16 14" className="ml-2 h-[14px] w-4" fill="none" stroke="#fff" strokeWidth="1.200" aria-label="Volume">
          <path d="M1 5h2.500L7 1.500v11L3.500 9H1zM9.500 4.500c1.300 1.500 1.300 3.500 0 5M11.800 2.500c2.300 2.500 2.300 6.500 0 9" />
          <path d="M14 1c3 3.500 3 8.500 0 12" opacity=".5" />
        </svg>
        <span className="ml-[10px]">ENG</span>
        <button className="ml-2 w-[60px] text-center text-[11px] leading-[18px] whitespace-nowrap">
          7:31 PM
          <br />
          8/28/2024
        </button>
        <button aria-label="Notifications" className="ml-3">
          <svg viewBox="0 0 24 26" className="h-[26px] w-6">
            <path d="M0 3h16v13H6l-3 3v-3H0z" fill="#fff" />
            <path d="M3 6.500h10M3 9.500h10M3 12.500h7" stroke="#3f3b38" strokeWidth="1.200" />
            <circle cx="15.500" cy="17" r="7.500" fill="#3f3b38" stroke="#999" />
            <text x="15.500" y="21" textAnchor="middle" fontSize="11" fontFamily="Noto Sans, sans-serif" fill="#fff">3</text>
          </svg>
        </button>
        <button aria-label="Copilot" className="ml-[14px]">
          <svg viewBox="0 0 20 20" className="size-5">
            <path d="M5 1h7c2 0 2 2 1 4l-3 9H3c-3 0-3-3-2-6l2-5c.5-1.500 1-2 2-2z" fill="#2b8ce8" />
            <path d="M1 8l3-1 3 7H3c-3 0-3-3-2-6z" fill="#f5c518" />
            <path d="M5 2c-1 4 0 5 4 5l3-6H5z" fill="#33b6a4" />
            <path d="M13 5h4c2 0 3 2 2 5l-1 3h-8z" fill="#c45ee0" />
            <path d="M14 9l5 1-1 3h-6z" fill="#f2708f" />
            <path d="M5 13h15v7H5z" fill="#ffd91a" />
            <text x="12.500" y="19" textAnchor="middle" fontSize="6" fontWeight="700" fontFamily="Liberation Sans, sans-serif" fill="#111">PRE</text>
          </svg>
        </button>
        <span className="mr-1 ml-[19px] h-10 w-px bg-[#77736f]" />
      </div>
    </footer>
  );
}

export default function App() {
  return (
    <div className={`${UI} relative flex h-screen w-full flex-col overflow-hidden bg-white`}>
      <TitleBar />
      <RibbonTabs />
      <div className="flex min-h-0 flex-1">
        <SlidesPane />
        <div className="w-[5px] shrink-0 border-r border-[#8b9097] bg-[#f1f2f4]" />
        <Editor />
      </div>
      <StatusBar />
      <Taskbar />
      <div className="pointer-events-none absolute right-14 bottom-[73px] w-[237px] whitespace-nowrap text-[#8a8a8a]/55">
        <p className="text-[19px] leading-6">Activate Windows</p>
        <p className="text-[14px] leading-5">Go to Settings to activate Windows.</p>
      </div>
    </div>
  );
}
